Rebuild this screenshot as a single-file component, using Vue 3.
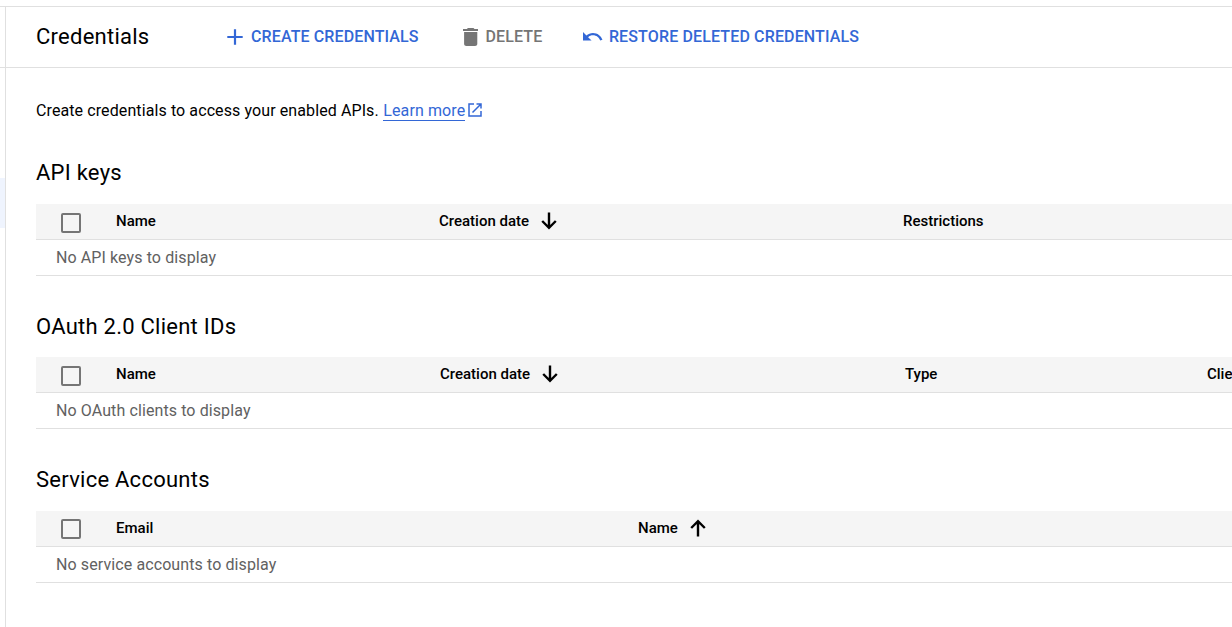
<script setup>
const tables = [
  {
    id: 'keys', title: 'API keys', empty: 'No API keys to display', sort: 1, arrow: 'down',
    columns: ['Name', 'Creation date', 'Restrictions'],
  },
  {
    id: 'oauth', title: 'OAuth 2.0 Client IDs', empty: 'No OAuth clients to display', sort: 1, arrow: 'down',
    columns: ['Name', 'Creation date', 'Type', 'Client ID'],
  },
  {
    id: 'service', title: 'Service Accounts', empty: 'No service accounts to display', sort: 1, arrow: 'up',
    columns: ['Email', 'Name'],
  },
]
</script>

<template>
  <div class="page">
    <aside class="rail"><div class="rail-bar"></div><div class="active"></div></aside>
    <main class="main">
      <header class="bar">
        <h1>Credentials</h1>
        <button class="action create">
          <svg width="16" height="16" viewBox="0 0 16 16"><path d="M8 0.300v15.400M0.300 8h15.400" stroke="currentColor" stroke-width="2.200" /></svg>
          <span>CREATE CREDENTIALS</span>
        </button>
        <button class="action delete">
          <svg width="15.4" height="18" viewBox="5 3 14 18" preserveAspectRatio="none"><path fill="currentColor" d="M6 19c0 1.1.9 2 2 2h8c1.1 0 2-.9 2-2V7H6v12zM19 4h-3.500l-1-1h-5l-1 1H5v2h14V4z" /></svg>
          <span>DELETE</span>
        </button>
        <button class="action restore">
          <svg width="19.5" height="8.6" viewBox="2 7 20.500 9"><path fill="currentColor" d="M12.500 8c-2.650 0-5.050.99-6.900 2.600L2 7v9h9l-3.620-3.620c1.390-1.160 3.160-1.880 5.120-1.880 3.540 0 6.550 2.310 7.600 5.500l2.370-.78C21.080 11.030 17.150 8 12.500 8z" /></svg>
          <span>RESTORE DELETED CREDENTIALS</span>
        </button>
      </header>
      <div class="content">
        <p class="intro">
          <span>Create credentials to access your enabled APIs.</span>
          <a>Learn more</a>
          <svg width="14" height="14" viewBox="0 0 14 14"><path d="M6 1H1v12h12V8M8.500 1H13v4.500M13 1L4.500 9.500" fill="none" stroke="currentColor" stroke-width="1.500" /></svg>
        </p>
        <section v-for="t in tables" :key="t.id" :class="t.id">
          <h2>{{ t.title }}</h2>
          <div class="head">
            <span class="check"></span>
            <div v-for="(c, i) in t.columns" :key="c" class="cell">
              <span>{{ c }}</span>
              <svg v-if="i === t.sort" :class="t.arrow" width="16" height="18" viewBox="0 0 16 18"><path d="M8 0.500v15.500M1.200 9L8 15.800l6.800-6.800" fill="none" stroke="currentColor" stroke-width="2.400" /></svg>
            </div>
          </div>
          <div class="empty">{{ t.empty }}</div>
        </section>
      </div>
    </main>
  </div>
</template>

<style>
body { margin: 0; background: #fff; overflow: hidden; }
</style>
<style scoped>
.page { width: 1232px; height: 627px; display: flex; overflow: hidden; font-family: Roboto, sans-serif; color: #000; background: #fff; box-sizing: border-box; }
.rail { width: 5px; flex: none; border-right: 1px solid #e0e0e0; margin-top: 6px; }
.rail-bar { height: 60px; border-top: 1px solid #e0e0e0; border-bottom: 1px solid #e0e0e0; }
.active { margin-top: 110px; height: 50px; background: #eff4fe; }
.main { flex: none; width: 1226px; }
.bar { height: 60px; margin-top: 6px; border-top: 1px solid #e0e0e0; border-bottom: 1px solid #e0e0e0; display: flex; align-items: center; padding-left: 30px; }
h1 { font-weight: 400; font-size: 22px; line-height: 28px; letter-spacing: 0.25px; margin: -1px 0 0; width: 191px; flex: none; }
.action { display: flex; align-items: center; border: 0; background: none; padding: 0; font: 500 16px/20px Roboto, sans-serif; letter-spacing: 0.12px; color: #3367d6; white-space: nowrap; }
.create svg { margin-right: 8px; }
.delete { color: #757575; margin-left: 44px; }
.delete svg { margin: -1px 7.5px 0 0; }
.restore { margin-left: 41px; }
.restore svg { margin: -1px 6px 0 0; }
.restore span { letter-spacing: 0.14px; }
.content { padding: 32px 0 0 30px; }
.intro { display: flex; margin: 0; height: 21px; font-size: 16px; line-height: 21px; letter-spacing: 0.1px; white-space: nowrap; }
.intro a { margin-left: 4.5px; color: #3367d6; border-bottom: 1px solid #3367d6; height: 20px; }
.intro svg { color: #3367d6; margin: 3px 0 0 3px; }
section { height: 153px; }
.keys { margin-top: 37px; height: 154px; }
h2 { margin: 0; font-weight: 400; font-size: 22px; line-height: 30px; letter-spacing: 0.25px; height: 46px; }
.oauth h2 { height: 45px; }
.head { height: 35px; background: #f5f5f5; border-bottom: 1px solid #e0e0e0; display: grid; grid-template-columns: 80px 323px 464px 340px; align-items: center; font-size: 15px; font-weight: 500; }
.oauth .head { grid-template-columns: 80px 324px 465px 302px 120px; }
.service .head { grid-template-columns: 80px 522px 500px; }
.check { width: 16px; height: 16px; border: 2px solid #757575; border-radius: 2px; margin: 3px 0 0 25px; }
.service .check { margin-top: 1px; }
.cell { display: flex; align-items: center; white-space: nowrap; margin-top: -2px; }
.cell svg { margin-left: 12px; }
.oauth .cell svg { margin-top: 1px; }
.up { transform: rotate(180deg); }
.empty { height: 35px; line-height: 35px; padding-left: 20px; font-size: 16px; letter-spacing: 0.1px; color: #616161; border-bottom: 1px solid #e0e0e0; }
</style>
